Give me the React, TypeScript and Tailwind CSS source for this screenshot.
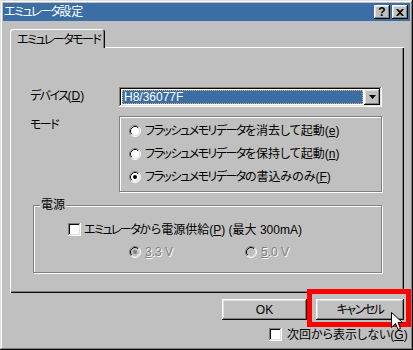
import React from "react";

function K({ children }: { children: React.ReactNode }) {
  return <span className="tracking-[-1.5px]">{children}</span>;
}

function Radio({ checked, disabled }: { checked?: boolean; disabled?: boolean }) {
  return (
    <svg width="12" height="12" viewBox="0 0 12 12" className="shrink-0 block">
      <circle cx="6" cy="6" r="5" fill={disabled ? "#c0c0c0" : "#ffffff"} />
      <path d="M2.11 9.89 A5.5 5.5 0 0 1 9.89 2.11" stroke="#808080" fill="none" />
      <path d="M9.89 2.11 A5.5 5.5 0 0 1 2.11 9.89" stroke="#ffffff" fill="none" />
      <path d="M2.82 9.18 A4.5 4.5 0 0 1 9.18 2.82" stroke="#0a0a0a" fill="none" />
      <path d="M9.18 2.82 A4.5 4.5 0 0 1 2.82 9.18" stroke="#dfdfdf" fill="none" />
      {checked && <circle cx="6" cy="6" r="2" fill={disabled ? "#808080" : "#000000"} />}
    </svg>
  );
}

function Check() {
  return (
    <div className="w-[13px] h-[13px] shrink-0 bg-white shadow-[inset_-1px_-1px_#ffffff,inset_1px_1px_#808080,inset_-2px_-2px_#dfdfdf,inset_2px_2px_#0a0a0a]" />
  );
}

export default function App() {
  return (
    <div className="relative w-[413px] h-[350px] bg-[#c0c0c0] p-[3px] whitespace-nowrap shadow-[inset_-1px_-1px_#0a0a0a,inset_1px_1px_#dfdfdf,inset_-2px_-2px_#808080,inset_2px_2px_#ffffff] font-['Liberation_Sans','Noto_Sans_CJK_JP',sans-serif] [font-feature-settings:'palt'] text-[12px] leading-none text-black">
      {/* Title bar */}
      <div className="h-[18px] bg-[#3a6ea5] flex items-center justify-between pl-[1px] pr-[2px]">
        <span className="text-white"><K>エミュレータ</K>設定</span>
        <div className="flex gap-[2px]">
          <div className="w-[16px] h-[14px] bg-[#c0c0c0] flex items-center justify-center shadow-[inset_-1px_-1px_#0a0a0a,inset_1px_1px_#ffffff,inset_-2px_-2px_#808080,inset_2px_2px_#dfdfdf]">
            <span className="font-bold text-[12px] leading-none font-['Liberation_Sans',sans-serif]">?</span>
          </div>
          <div className="w-[16px] h-[14px] bg-[#c0c0c0] flex items-center justify-center shadow-[inset_-1px_-1px_#0a0a0a,inset_1px_1px_#ffffff,inset_-2px_-2px_#808080,inset_2px_2px_#dfdfdf]">
            <svg width="8" height="7" viewBox="0 0 8 7" className="block">
              <path d="M0 0h2l2 2 2-2h2L5 3.5 8 7H6L4 5 2 7H0l3-3.5z" fill="#000" />
            </svg>
          </div>
        </div>
      </div>

      {/* Tabs + panel */}
      <div className="ml-[7px] mt-[8px] w-[394px]">
        <div className="flex h-[19px]">
          <div className="w-[95px] h-[19px] rounded-t-[3px] shadow-[inset_1px_1px_#ffffff,inset_-1px_0_#0a0a0a,inset_-2px_0_#808080] pl-[7px] pt-[5px]">
            <K>エミュレータモード</K>
          </div>
          <div className="flex-1 border-b border-white" />
        </div>
        <div className="h-[245px] pt-[39px] shadow-[inset_1px_0_#ffffff,inset_-1px_-1px_#0a0a0a,inset_-2px_-2px_#808080]">
          {/* Device row */}
          <div className="flex items-center pl-[20px]">
            <div className="w-[89px] pb-[2px]">
              <K>デバイス</K>(<span className="underline">D</span>)
            </div>
            <div className="w-[263px] h-[20px] p-[2px] bg-white shadow-[inset_-1px_-1px_#ffffff,inset_1px_1px_#808080,inset_-2px_-2px_#dfdfdf,inset_2px_2px_#0a0a0a] flex">
              <div className="flex-1 p-[1px]">
                <div className="h-full bg-[#3a6ea5] border border-dotted border-[#e8b060] text-white flex items-center pl-[1px]">
                  H8/36077F
                </div>
              </div>
              <div className="w-[16px] h-[16px] bg-[#c0c0c0] flex items-center justify-center shadow-[inset_-1px_-1px_#0a0a0a,inset_1px_1px_#ffffff,inset_-2px_-2px_#808080,inset_2px_2px_#dfdfdf]">
                <svg width="7" height="4" viewBox="0 0 7 4" className="block">
                  <path d="M0 0h7L3.5 4z" fill="#000" />
                </svg>
              </div>
            </div>
          </div>

          {/* Mode row */}
          <div className="flex items-start pl-[20px] mt-[9px]">
            <div className="w-[89px] pt-[3px]"><K>モード</K></div>
            <div className="w-[263px] h-[76px] border border-[#808080] shadow-[1px_1px_0_#ffffff,inset_1px_1px_0_#ffffff] pl-[9px] pt-[2px]">
              <div className="h-[23px] flex items-center gap-[4px]">
                <Radio />
                <span><K>フラッシュメモリデータ</K>を消去して起動(<span className="underline">e</span>)</span>
              </div>
              <div className="h-[23px] flex items-center gap-[4px]">
                <Radio />
                <span><K>フラッシュメモリデータ</K>を保持して起動(<span className="underline">n</span>)</span>
              </div>
              <div className="h-[23px] flex items-center gap-[4px]">
                <Radio checked />
                <span><K>フラッシュメモリデータ</K>の書込みのみ(<span className="underline">F</span>)</span>
              </div>
            </div>
          </div>

          {/* Power group */}
          <div className="relative ml-[23px] mt-[13px] w-[349px] h-[68px] border border-[#808080] shadow-[1px_1px_0_#ffffff,inset_1px_1px_0_#ffffff] pl-[34px] pt-[17px]">
            <span className="absolute left-[6px] top-[-7px] bg-[#c0c0c0] px-[1px]">電源</span>
            <div className="flex items-center gap-[3px]">
              <Check />
              <span><K>エミュレータ</K>から電源供給(<span className="underline">P</span>) (最大 300mA)</span>
            </div>
            <div className="flex items-center ml-[61px] mt-[10px] text-[#808080] [text-shadow:1px_1px_0_#ffffff]">
              <div className="w-[116px] flex items-center gap-[4px]">
                <Radio checked disabled />
                <span><span className="underline">3</span>.3 V</span>
              </div>
              <div className="flex items-center gap-[4px]">
                <Radio disabled />
                <span><span className="underline">5</span>.0 V</span>
              </div>
            </div>
          </div>
        </div>
      </div>

      {/* Buttons */}
      <div className="flex ml-[219px] mt-[6px] gap-[9px]">
        <div className="w-[85px] h-[21px] flex items-center justify-center shadow-[inset_-1px_-1px_#0a0a0a,inset_1px_1px_#ffffff,inset_-2px_-2px_#808080,inset_2px_2px_#dfdfdf]">
          OK
        </div>
        <div className="w-[88px] h-[21px] flex items-center justify-center shadow-[inset_-1px_-1px_#0a0a0a,inset_1px_1px_#ffffff,inset_-2px_-2px_#808080,inset_2px_2px_#dfdfdf]">
          <K>キャンセル</K>
        </div>
      </div>

      {/* Don't show again */}
      <div className="flex items-center ml-[266px] mt-[8px] gap-[5px]">
        <Check />
        <span>次回から表示しない(<span className="underline">G</span>)</span>
      </div>

      {/* Red highlight */}
      <div className="absolute left-[307px] top-[289px] w-[104px] h-[38px] border-[5px] border-[#ff0000]" />

      {/* Cursor */}
      <svg width="13" height="20" viewBox="0 0 13 20" className="absolute left-[391px] top-[312px]">
        <path d="M0.5 0.5 L0.5 15.5 L4.5 11.5 L7 17.5 L9.5 16.5 L7 10.5 L11.5 10.5 Z" fill="#ffffff" stroke="#000000" strokeWidth="1" />
      </svg>
    </div>
  );
}
